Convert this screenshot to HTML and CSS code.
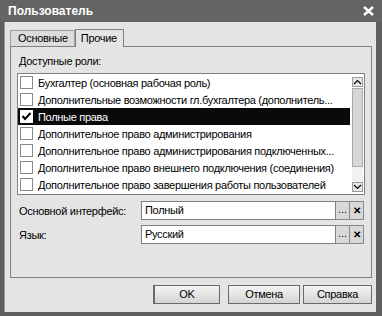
FILE: index.html
```html
<!DOCTYPE html>
<html>
<head>
    <meta charset="utf-8">
    <link rel="stylesheet" href="styles.css">
</head>
<body>
<div class="window">
    <div class="titlebar">
        <span class="title">Пользователь</span>
        <svg class="close" width="11" height="10" viewBox="0 0 11 10">
            <path d="M1 1 L10 9 M10 1 L1 9" stroke="#fff" stroke-width="2.4" fill="none"/>
        </svg>
    </div>
    <div class="content">
        <div class="tabs">
            <div class="tab">Основные</div>
            <div class="tab active">Прочие</div>
        </div>
        <div class="panel">
            <div class="caption">Доступные роли:</div>
            <div class="list">
                <div class="rows">
                    <div class="row"><span class="check"></span>Бухгалтер (основная рабочая роль)</div>
                    <div class="row"><span class="check"></span>Дополнительные возможности гл.бухгалтера (дополнитель...</div>
                    <div class="row selected"><span class="check on">
                        <svg width="11" height="11" viewBox="0 0 11 11"><path d="M1.5 5 L4 8 L9.5 2" stroke="#000" stroke-width="2" fill="none"/></svg>
                    </span>Полные права</div>
                    <div class="row"><span class="check"></span>Дополнительное право администрирования</div>
                    <div class="row"><span class="check"></span>Дополнительное право администрирования подключенных...</div>
                    <div class="row"><span class="check"></span>Дополнительное право внешнего подключения (соединения)</div>
                    <div class="row"><span class="check"></span>Дополнительное право завершения работы пользователей</div>
                </div>
                <div class="scrollbar">
                    <div class="sb-btn">
                        <svg width="9" height="6" viewBox="0 0 9 6"><path d="M1 5 L4.5 1.5 L8 5" stroke="#000" stroke-width="1.2" fill="none"/></svg>
                    </div>
                    <div class="sb-thumb"></div>
                    <div class="sb-track"></div>
                    <div class="sb-btn">
                        <svg width="9" height="6" viewBox="0 0 9 6"><path d="M1 1 L4.5 4.5 L8 1" stroke="#000" stroke-width="1.2" fill="none"/></svg>
                    </div>
                </div>
            </div>
            <div class="field">
                <span class="label">Основной интерфейс:</span>
                <span class="input">Полный</span>
                <span class="mini">...</span>
                <span class="mini x">&#x2715;</span>
            </div>
            <div class="field">
                <span class="label">Язык:</span>
                <span class="input">Русский</span>
                <span class="mini">...</span>
                <span class="mini x">&#x2715;</span>
            </div>
        </div>
        <div class="buttons">
            <div class="btn ok">OK</div>
            <div class="btn cancel">Отмена</div>
            <div class="btn help">Справка</div>
        </div>
    </div>
</div>
</body>
</html>
```

FILE: styles.css
```css
body {
    margin: 0;
    font-family: "Liberation Sans", Arial, sans-serif;
    font-size: 11px;
    letter-spacing: -0.3px;
    color: #000;
}

.window {
    width: 382px;
    height: 316px;
    box-sizing: border-box;
    background: #5e5e5e;
    padding: 0 6px 4px 4px;
    display: flex;
    flex-direction: column;
}

.titlebar {
    height: 22px;
    margin: 0 -6px 0 -4px;
    padding: 0 8px 0 8px;
    background: #646464;
    display: flex;
    align-items: center;
    justify-content: space-between;
}

.title {
    color: #fff;
    font-weight: bold;
    font-size: 12px;
    letter-spacing: 0;
}

.content {
    flex: 1;
    background: #e4e4e4;
    border-left: 1px solid #9a9a9a;
    padding: 6px 4px 0 5px;
    display: flex;
    flex-direction: column;
}

/* tabs */

.tabs {
    display: flex;
    align-items: flex-end;
    height: 18px;
}

.tab {
    height: 15px;
    line-height: 15px;
    padding: 0 6px 0 7px;
    border: 1px solid #a0a0a0;
    border-bottom: none;
    background: #dcdcdc;
}

.tab.active {
    height: 17px;
    line-height: 17px;
    background: #e4e4e4;
    border-color: #808080;
    padding: 0 6px 0 5px;
    margin-bottom: -1px;
    position: relative;
}

.panel {
    height: 224px;
    border: 1px solid #808080;
    padding: 6px 6px 0 6px;
}

.caption {
    padding-left: 2px;
    height: 20px;
    line-height: 16px;
}

/* list */

.list {
    height: 120px;
    border: 1px solid #808080;
    background: #fff;
    display: flex;
    gap: 2px;
    padding: 0 1px 0 0;
}

.rows {
    flex: 1;
    min-width: 0;
}

.row {
    height: 17px;
    display: flex;
    align-items: center;
    white-space: nowrap;
    overflow: hidden;
}

.row.selected {
    background: #0a0a0a;
    color: #fff;
}

.check {
    width: 11px;
    height: 11px;
    border: 1px solid #8a8a8a;
    background: #fff;
    margin: 0 5px 0 2px;
    flex: none;
    display: flex;
}

.check.on {
    border-color: #fff;
}

.scrollbar {
    width: 11px;
    flex: none;
    padding: 3px 0 2px 0;
    display: flex;
    flex-direction: column;
}

.sb-btn {
    height: 8px;
    border: 1px solid #9a9a9a;
    background: #e8e8e8;
    display: flex;
    align-items: center;
    justify-content: center;
}

.sb-thumb {
    height: 77px;
    margin-top: 1px;
    border: 1px solid #aaa;
    background: #d6d6d6;
}

.sb-track {
    flex: 1;
    background: #f2f2f2;
}

/* fields */

.field {
    display: flex;
    align-items: center;
    height: 19px;
    margin-top: 6px;
}

.field + .field {
    margin-top: 5px;
}

.label {
    flex: none;
    width: 122px;
    padding-left: 2px;
}

.input {
    flex: none;
    width: 190px;
    height: 17px;
    line-height: 17px;
    border: 1px solid #808080;
    background: #fff;
    padding-left: 3px;
}

.mini {
    flex: none;
    width: 13px;
    height: 17px;
    border: 1px solid #8a8a8a;
    border-left: none;
    background: #d8d8d8;
    text-align: center;
    line-height: 15px;
    letter-spacing: 0;
}

.mini.x {
    font-size: 10px;
    font-weight: bold;
    line-height: 17px;
}

/* bottom buttons */

.buttons {
    display: flex;
    justify-content: flex-end;
    margin-top: 7px;
}

.btn {
    height: 17px;
    line-height: 17px;
    border: 1px solid #6a6a6a;
    background: linear-gradient(#f4f4f4, #d4d4d4);
    text-align: center;
}

.ok {
    width: 64px;
    border-width: 1px 1px 1px 2px;
    margin-right: 8px;
}

.cancel {
    width: 70px;
    margin-right: 3px;
}

.help {
    width: 67px;
}
```
